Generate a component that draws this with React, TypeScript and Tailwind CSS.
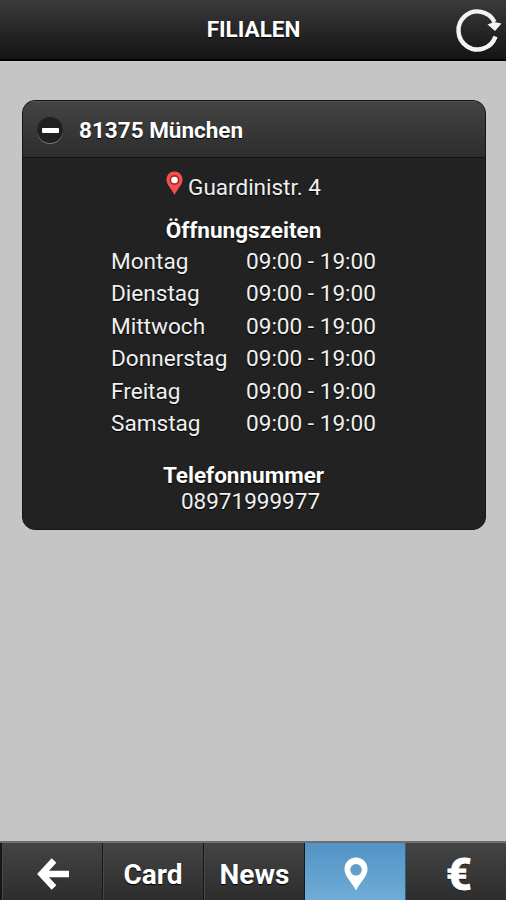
import React from "react";

const openingHours = [
  { day: "Montag", hours: "09:00 - 19:00" },
  { day: "Dienstag", hours: "09:00 - 19:00" },
  { day: "Mittwoch", hours: "09:00 - 19:00" },
  { day: "Donnerstag", hours: "09:00 - 19:00" },
  { day: "Freitag", hours: "09:00 - 19:00" },
  { day: "Samstag", hours: "09:00 - 19:00" },
];

const RefreshIcon = () => (
  <svg width="48" height="48" viewBox="0 0 48 48" fill="none">
    <path
      d="M40.5 30.5A19 19 0 1 1 39.5 16"
      stroke="#f4f4f4"
      strokeWidth="4.4"
    />
    <path d="M32.5 18.5L39 16L46.5 17.5L40 25Z" fill="#f4f4f4" />
  </svg>
);

const BackIcon = () => (
  <svg width="34" height="36" viewBox="0 0 34 36" fill="none">
    <path
      d="M18 3.5L5.5 17L18 30.5M6.5 17H33"
      stroke="#fff"
      strokeWidth="6.4"
    />
  </svg>
);

const PinIcon = () => (
  <svg width="24" height="34" viewBox="0 0 24 34">
    <path
      fill="#fff"
      fillRule="evenodd"
      d="M12 0.5C5.4 0.5 0.5 5.6 0.5 12C0.5 19.5 7.5 24.5 12 33.5C16.5 24.5 23.5 19.5 23.5 12C23.5 5.6 18.6 0.5 12 0.5ZM12 7A5.8 5.8 0 1 1 12 18.6A5.8 5.8 0 1 1 12 7Z"
    />
  </svg>
);

const AddressPin = () => (
  <svg width="17" height="25" viewBox="0 0 17 25">
    <path
      fill="#f4504f"
      d="M8.5 0.5C4 0.5 0.5 4 0.5 8.6C0.5 14 5 17 8.5 24C12 17 16.5 14 16.5 8.6C16.5 4 13 0.5 8.5 0.5Z"
    />
    <circle cx="8.5" cy="9" r="5" fill="#ae2528" />
    <circle cx="8.5" cy="9" r="3.3" fill="#fff" />
  </svg>
);

const tabClass =
  "flex items-center justify-center border-r border-[#171717] shadow-[inset_1px_0_0_#484848]";

const App = () => {
  return (
    <div className="flex h-[900px] w-full flex-col bg-[#c5c5c5] font-['Roboto',sans-serif] text-white [text-shadow:0_1px_1px_#000]">
      <header className="grid h-[61px] shrink-0 grid-cols-[1fr_auto_1fr] items-center border-b-2 border-black bg-linear-to-b from-[#3b3b3b] to-[#141414]">
        <span />
        <h1 className="pb-[2px] pl-px text-[22.5px] leading-[56px] font-bold">
          FILIALEN
        </h1>
        <div className="flex justify-end pr-[3px]">
          <RefreshIcon />
        </div>
      </header>

      <main className="flex-1 pt-[39px] pr-[20px] pl-[22px]">
        <section className="h-[430px] overflow-hidden rounded-[13px] border border-[#151515] bg-[#222]">
          <div className="flex h-[57px] items-center border-b border-[#151515] bg-linear-to-b from-[#444] to-[#2d2d2d] pl-[14px] shadow-[inset_0_1px_0_#555]">
            <div className="mt-[2px] flex h-[26px] w-[26px] items-center justify-center rounded-full bg-[#202020] shadow-[0_1px_0_#777]">
              <div className="h-[5px] w-[17px] rounded-[1px] bg-white" />
            </div>
            <h2 className="mt-[2px] ml-[16px] text-[22.5px] leading-[28px] font-bold">
              81375 München
            </h2>
          </div>

          <div className="pr-[21px] text-center text-[22.5px] leading-[26px] text-[#f0f0f0]">
            <div className="flex items-start justify-center gap-[5px] pt-[13px]">
              <AddressPin />
              <span className="pt-[3px]">Guardinistr. 4</span>
            </div>
            <h3 className="mt-[17px] font-bold text-white">Öffnungszeiten</h3>
            <div className="mt-[3px] ml-[88px] grid grid-cols-[135px_1fr] text-left text-[22.6px] leading-[32.4px]">
              {openingHours.map((item) => (
                <React.Fragment key={item.day}>
                  <span>{item.day}</span>
                  <span>{item.hours}</span>
                </React.Fragment>
              ))}
            </div>
            <h3 className="mt-[21.4px] font-bold text-white">Telefonnummer</h3>
            <p className="pl-[14px]">08971999977</p>
          </div>
        </section>
      </main>

      <nav className="grid h-[59px] shrink-0 grid-cols-[103px_101px_101px_101px_100px] border-t-2 border-[#6e6e6e] bg-linear-to-b from-[#444] to-[#2d2d2d] text-[28px] font-bold">
        <div className={`${tabClass} border-l-2 pt-[6px] pl-px`}>
          <BackIcon />
        </div>
        <div className={`${tabClass} pt-[7px]`}>Card</div>
        <div className={`${tabClass} pt-[7px] pl-px`}>News</div>
        <div className="flex items-center justify-center border-r border-[#315d80] bg-linear-to-b from-[#5393c5] to-[#6facd5] pt-[4px] pl-[2px]">
          <PinIcon />
        </div>
        <div className="flex items-center justify-center pt-[5px] pl-[6px] text-[45px] leading-none [-webkit-text-stroke:1px_#fff]">
          €
        </div>
      </nav>
    </div>
  );
};

export default App;
